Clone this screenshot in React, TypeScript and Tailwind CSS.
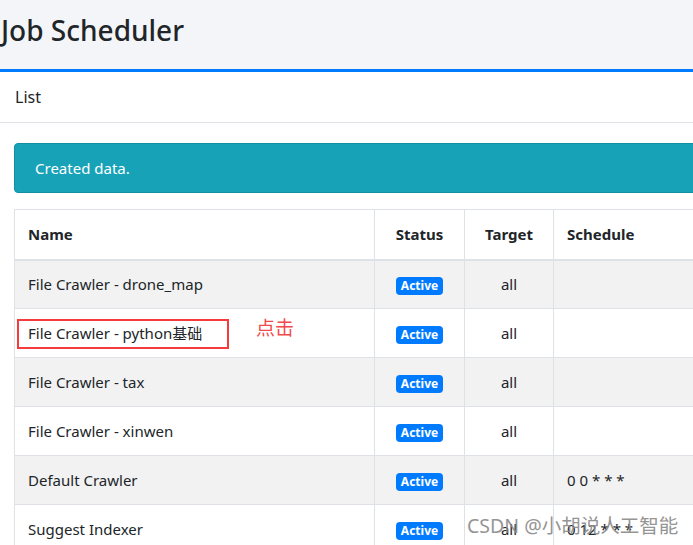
const rows = [
  { name: "File Crawler - drone_map", schedule: "" },
  { name: "File Crawler - python基础", schedule: "", marked: true },
  { name: "File Crawler - tax", schedule: "" },
  { name: "File Crawler - xinwen", schedule: "" },
  { name: "Default Crawler", schedule: "0 0 * * *" },
  { name: "Suggest Indexer", schedule: "0 12 * * *" },
]

export default function App() {
  return (
    <div
      className="relative w-[693px] h-[545px] overflow-hidden bg-white text-[#212529]"
      style={{ fontFamily: '"Noto Sans", "Noto Sans CJK SC", sans-serif' }}
    >
      <div className="h-[72px] bg-[#f4f5f8] border-b-[3px] border-[#007bff] flex items-center pl-[1px] pb-[10px]">
        <h1 className="text-[28px] font-medium leading-none">Job Scheduler</h1>
      </div>

      <div className="h-[51px] px-[15px] flex items-center border-b border-[#dee2e6] text-[16px]">
        List
      </div>

      <div className="pl-[14px] pt-[20px]">
        <div className="w-[800px] h-[50px] bg-[#17a2b8] border border-[#148ea1] rounded-l-[4px] flex items-center pl-[20px] text-white text-[15px]">
          Created data.
        </div>

        <table className="mt-[16px] w-[820px] border-collapse text-[15px] table-fixed">
          <thead>
            <tr className="h-[50px]">
              <th className="w-[360px] border border-[#dee2e6] border-b-2 px-[13px] text-left font-bold">Name</th>
              <th className="w-[90px] border border-[#dee2e6] border-b-2 text-center font-bold">Status</th>
              <th className="w-[89px] border border-[#dee2e6] border-b-2 text-center font-bold">Target</th>
              <th className="border border-[#dee2e6] border-b-2 px-[13px] text-left font-bold">Schedule</th>
            </tr>
          </thead>
          <tbody>
            {rows.map((r, i) => (
              <tr key={r.name} className={i % 2 === 0 ? "h-[49px] bg-[#f2f2f2]" : "h-[49px]"}>
                <td className="border border-[#dee2e6] px-[13px]">
                  <div className="relative">
                    {r.name}
                    {r.marked && (
                      <>
                        <div className="absolute left-[-11px] top-[-3px] w-[212px] h-[30px] border-2 border-[#f53b3b]" />
                        <div className="absolute left-[228px] top-[-3px] text-[19px] leading-none text-[#f24a4a]">点击</div>
                      </>
                    )}
                  </div>
                </td>
                <td className="border border-[#dee2e6] text-center">
                  <span className="inline-block bg-[#007bff] text-white text-[12px] font-bold leading-none px-[5px] py-[3px] rounded-[4px]">
                    Active
                  </span>
                </td>
                <td className="border border-[#dee2e6] text-center">all</td>
                <td className="border border-[#dee2e6] px-[13px]">{r.schedule}</td>
              </tr>
            ))}
          </tbody>
        </table>
      </div>

      <div className="absolute left-[467px] top-[511px] text-[19.5px] text-[#8a8a8a] opacity-90 whitespace-nowrap">
        CSDN @小胡说人工智能
      </div>
    </div>
  )
}
